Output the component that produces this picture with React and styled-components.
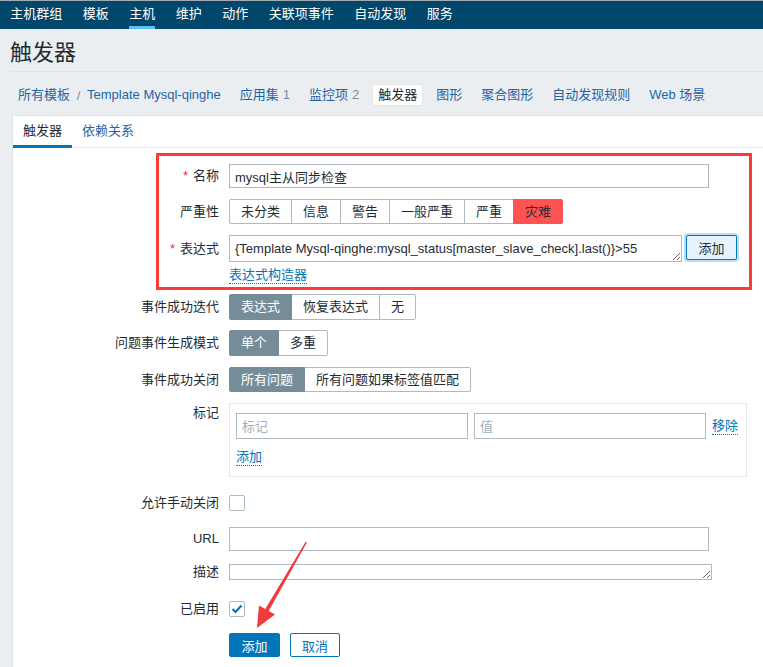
import React from 'react';
import styled, { createGlobalStyle } from 'styled-components';

const Global = createGlobalStyle`
  html, body { margin: 0; padding: 0; background: #ebeef0; overflow: hidden; }
  body {
    font-family: "Liberation Sans", "Noto Sans CJK SC", sans-serif;
    font-size: 13px;
    color: #1f2c33;
  }
  * { box-sizing: border-box; }
`;

const Page = styled.div`
  position: relative;
  width: 763px;
  height: 667px;
  overflow: hidden;
  background: #ebeef0;
`;

const TopNav = styled.nav`
  display: flex;
  height: 29px;
  background: #00476b;
  border-top: 1px solid #a3abb0;
`;

const NavItem = styled.a`
  display: flex;
  height: 100%;
  padding: 0 10.25px;
  color: #ffffff;
  font-size: 13px;
  text-decoration: none;
`;

const NavLabel = styled.span`
  display: flex;
  align-items: center;
  height: 100%;
  line-height: 16px;
  border-bottom: 3px solid ${p => (p.$active ? '#5ac0f5' : 'transparent')};
`;

const Header = styled.header`
  display: flex;
  align-items: center;
  height: 43px;
  margin-left: 10px;
  padding-top: 6px;
  border-bottom: 1px solid #dde3e6;
`;

const Title = styled.h1`
  margin: 0;
  font-size: 22px;
  font-weight: normal;
  line-height: 30px;
  color: #1f2c33;
`;

const Breadcrumbs = styled.div`
  display: flex;
  align-items: center;
  gap: 7px;
  padding: 12px 0 9px 12px;
`;

const CrumbPath = styled.div`
  display: flex;
  align-items: center;
`;

const Crumb = styled.a`
  display: flex;
  align-items: center;
  height: 22px;
  padding: 0 5px;
  line-height: 16px;
  color: ${p => (p.$active ? '#1f2c33' : '#1f65a6')};
  background: ${p => (p.$active ? '#ffffff' : 'transparent')};
  border: 1px solid ${p => (p.$active ? '#e2e7ea' : 'transparent')};
  border-radius: 2px;
  text-decoration: none;
  white-space: nowrap;
`;

const Sep = styled.span`
  width: 5px;
  text-align: center;
  color: #768d99;
`;

const Count = styled.span`
  margin-left: 4px;
  color: #768d99;
`;

const Panel = styled.section`
  margin-left: 12px;
  height: 560px;
  background: #ffffff;
  border: 1px solid #dfe4e7;
  border-right: 0;
`;

const TabBar = styled.div`
  display: flex;
  height: 32px;
  border-bottom: 1px solid #ebeef0;
`;

const Tab = styled.a`
  display: flex;
  align-items: center;
  padding: 0 10px;
  margin-bottom: -1px;
  line-height: 16px;
  color: ${p => (p.$active ? '#1f2c33' : '#1f65a6')};
  border-bottom: 3px solid ${p => (p.$active ? '#0275b8' : 'transparent')};
  text-decoration: none;
`;

const Form = styled.div`
  display: flex;
  flex-direction: column;
`;

const Row = styled.div`
  display: flex;
  align-items: flex-start;
  margin-top: ${p => p.$mt}px;
`;

const Label = styled.label`
  flex: 0 0 206px;
  margin-right: 10px;
  text-align: right;
  line-height: ${p => p.$lh || 24}px;
  white-space: nowrap;
  color: #1f2c33;
`;

const Req = styled.span`
  color: #e33734;
  margin-right: 5px;
`;

const Field = styled.div`
  display: flex;
  flex-direction: column;
  align-items: flex-start;
`;

const TextInput = styled.input`
  width: ${p => p.$w}px;
  height: ${p => p.$h || 24}px;
  padding: 0 5px;
  border: 1px solid #acbbc2;
  border-radius: 0;
  background: #ffffff;
  font: inherit;
  font-size: 13px;
  color: #1f2c33;
  outline: none;
  &::placeholder { color: #9fb0b8; }
`;

const TextArea = styled.textarea`
  display: block;
  width: ${p => p.$w}px;
  height: ${p => p.$h}px;
  padding: ${p => (p.$h > 20 ? '4px 5px' : '0 5px')};
  border: 1px solid #acbbc2;
  border-radius: 0;
  background: #ffffff;
  font: inherit;
  font-size: 13px;
  line-height: 18px;
  color: #1f2c33;
  resize: vertical;
  overflow: hidden;
  outline: none;
`;

const ExprLine = styled.div`
  display: flex;
  gap: 4px;
`;

const LightButton = styled.button`
  width: 51px;
  height: 25px;
  padding: 0;
  border: 1px solid #0275b8;
  border-radius: 2px;
  background: #e5f4fc;
  box-shadow: 0 0 0 2px rgba(2, 117, 184, 0.25);
  font: inherit;
  font-size: 13px;
  color: #1f2c33;
`;

const LinkText = styled.a`
  display: inline-block;
  margin-top: ${p => p.$mt || 0}px;
  margin-left: ${p => p.$ml || 0}px;
  line-height: 16px;
  color: #0275b8;
  text-decoration: none;
  border-bottom: 1px dotted #0275b8;
  white-space: nowrap;
`;

const Segmented = styled.div`
  display: inline-flex;
  height: ${p => p.$h}px;
`;

const SegButton = styled.button`
  height: 100%;
  padding: 0 11px;
  margin-left: -1px;
  border: 1px solid ${p => (p.$active ? p.$bg || '#768d99' : '#acbbc2')};
  background: ${p => (p.$active ? p.$bg || '#768d99' : '#ffffff')};
  color: ${p => (p.$active && !p.$bg ? '#ffffff' : '#1f2c33')};
  font: inherit;
  font-size: 13px;
  line-height: 16px;
  white-space: nowrap;
  position: relative;
  z-index: ${p => (p.$active ? 1 : 0)};
  &:first-child { margin-left: 0; border-radius: 2px 0 0 2px; }
  &:last-child { border-radius: 0 2px 2px 0; }
`;

const TagBox = styled.div`
  width: 518px;
  padding: 9px 6px 10px 6px;
  border: 1px solid #e3e8eb;
`;

const TagLine = styled.div`
  display: flex;
  align-items: center;
  gap: 6px;
`;

const Checkbox = styled.span`
  display: inline-flex;
  align-items: center;
  justify-content: center;
  width: 16px;
  height: 16px;
  border: 1px solid #acbbc2;
  border-radius: 2px;
  background: #ffffff;
`;

const Actions = styled.div`
  display: flex;
  gap: 10px;
  margin-left: 216px;
`;

const PrimaryButton = styled.button`
  width: ${p => p.$w}px;
  height: 24px;
  padding: 0;
  border: 1px solid #0275b8;
  border-radius: 2px;
  background: ${p => (p.$outline ? '#ffffff' : '#0275b8')};
  color: ${p => (p.$outline ? '#0275b8' : '#ffffff')};
  font: inherit;
  font-size: 13px;
`;

const Highlight = styled.div`
  position: absolute;
  left: 156px;
  top: 153px;
  width: 596px;
  height: 137px;
  border: 3px solid #fb3a3a;
  pointer-events: none;
`;

const ArrowLayer = styled.svg`
  position: absolute;
  left: 0;
  top: 0;
  pointer-events: none;
`;

const navItems = ['主机群组', '模板', '主机', '维护', '动作', '关联项事件', '自动发现', '服务'];
const severities = ['未分类', '信息', '警告', '一般严重', '严重', '灾难'];

export default function App() {
  return (
    <Page>
      <Global />
      <TopNav>
        {navItems.map(n => (
          <NavItem key={n}>
            <NavLabel $active={n === '主机'}>{n}</NavLabel>
          </NavItem>
        ))}
      </TopNav>

      <Header>
        <Title>触发器</Title>
      </Header>

      <Breadcrumbs>
        <CrumbPath>
          <Crumb>所有模板</Crumb>
          <Sep>/</Sep>
          <Crumb>Template Mysql-qinghe</Crumb>
        </CrumbPath>
        <Crumb>应用集<Count>1</Count></Crumb>
        <Crumb>监控项<Count>2</Count></Crumb>
        <Crumb $active>触发器</Crumb>
        <Crumb>图形</Crumb>
        <Crumb>聚合图形</Crumb>
        <Crumb>自动发现规则</Crumb>
        <Crumb>Web 场景</Crumb>
      </Breadcrumbs>

      <Panel>
        <TabBar>
          <Tab $active>触发器</Tab>
          <Tab>依赖关系</Tab>
        </TabBar>

        <Form>
          <Row $mt={16}>
            <Label $lh={24}><Req>*</Req>名称</Label>
            <TextInput $w={480} defaultValue="mysql主从同步检查" />
          </Row>

          <Row $mt={11}>
            <Label $lh={25}>严重性</Label>
            <Segmented $h={25}>
              {severities.map(s => (
                <SegButton key={s} $active={s === '灾难'} $bg={s === '灾难' ? '#ff5252' : undefined}>
                  {s}
                </SegButton>
              ))}
            </Segmented>
          </Row>

          <Row $mt={11}>
            <Label $lh={27}><Req>*</Req>表达式</Label>
            <Field>
              <ExprLine>
                <TextArea
                  $w={453}
                  $h={27}
                  defaultValue="{Template Mysql-qinghe:mysql_status[master_slave_check].last()}>55"
                />
                <LightButton>添加</LightButton>
              </ExprLine>
              <LinkText $mt={5}>表达式构造器</LinkText>
            </Field>
          </Row>

          <Row $mt={10}>
            <Label $lh={26}>事件成功迭代</Label>
            <Segmented $h={26}>
              <SegButton $active>表达式</SegButton>
              <SegButton>恢复表达式</SegButton>
              <SegButton>无</SegButton>
            </Segmented>
          </Row>

          <Row $mt={10}>
            <Label $lh={26}>问题事件生成模式</Label>
            <Segmented $h={26}>
              <SegButton $active>单个</SegButton>
              <SegButton>多重</SegButton>
            </Segmented>
          </Row>

          <Row $mt={11}>
            <Label $lh={25}>事件成功关闭</Label>
            <Segmented $h={25}>
              <SegButton $active>所有问题</SegButton>
              <SegButton>所有问题如果标签值匹配</SegButton>
            </Segmented>
          </Row>

          <Row $mt={11}>
            <Label $lh={20}>标记</Label>
            <TagBox>
              <TagLine>
                <TextInput $w={232} $h={26} placeholder="标记" />
                <TextInput $w={232} $h={26} placeholder="值" />
                <LinkText>移除</LinkText>
              </TagLine>
              <LinkText $mt={10}>添加</LinkText>
            </TagBox>
          </Row>

          <Row $mt={18}>
            <Label $lh={16}>允许手动关闭</Label>
            <Checkbox />
          </Row>

          <Row $mt={16}>
            <Label $lh={24}>URL</Label>
            <TextInput $w={480} />
          </Row>

          <Row $mt={13}>
            <Label $lh={16}>描述</Label>
            <TextArea $w={483} $h={16} />
          </Row>

          <Row $mt={21}>
            <Label $lh={16}>已启用</Label>
            <Checkbox>
              <svg width="12" height="10" viewBox="0 0 12 10">
                <polyline points="1.5,5 4.5,8 10.5,1.5" fill="none" stroke="#0275b8" strokeWidth="2" />
              </svg>
            </Checkbox>
          </Row>

          <Row $mt={16}>
            <Actions>
              <PrimaryButton $w={51}>添加</PrimaryButton>
              <PrimaryButton $w={50} $outline>取消</PrimaryButton>
            </Actions>
          </Row>
        </Form>
      </Panel>

      <Highlight />
      <ArrowLayer width="763" height="667" viewBox="0 0 763 667">
        <polygon
          points="305.6,541.7 306.9,542.4 268.7,611 275,614.5 257,628 259,605.5 265.3,609"
          fill="#f23b3b"
        />
      </ArrowLayer>
    </Page>
  );
}
